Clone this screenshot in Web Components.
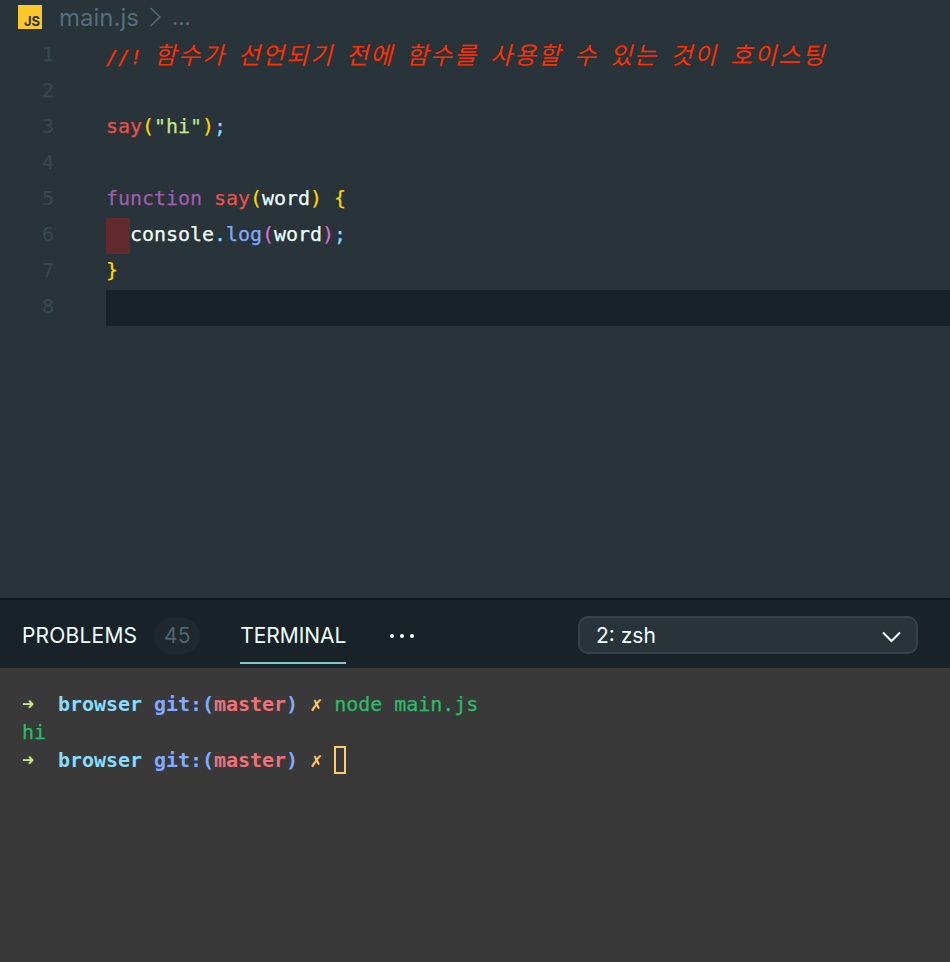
<!DOCTYPE html>
<html lang="ko">
<head>
<meta charset="utf-8">
<title>main.js</title>
<style>
  html, body { margin: 0; height: 100%; background: #29333a; }
  body { display: flex; flex-direction: column; height: 962px; overflow: hidden; }
</style>
</head>
<body>
<editor-breadcrumb>main.js</editor-breadcrumb>
<code-editor>
  <code-line n="1"><code-token kind="comment">//! <code-token kind="wide">함수가</code-token> <code-token kind="wide">선언되기</code-token> <code-token kind="wide">전에</code-token> <code-token kind="wide">함수를</code-token> <code-token kind="wide">사용할</code-token> <code-token kind="wide">수</code-token> <code-token kind="wide">있는</code-token> <code-token kind="wide">것이</code-token> <code-token kind="wide">호이스팅</code-token></code-token></code-line>
  <code-line n="2"></code-line>
  <code-line n="3"><code-token kind="red">say</code-token><code-token kind="yellow">(</code-token><code-token kind="string">"hi"</code-token><code-token kind="yellow">)</code-token><code-token kind="cyan">;</code-token></code-line>
  <code-line n="4"></code-line>
  <code-line n="5"><code-token kind="purple">function</code-token> <code-token kind="red">say</code-token><code-token kind="yellow">(</code-token><code-token kind="white">word</code-token><code-token kind="yellow">)</code-token> <code-token kind="yellow">{</code-token></code-line>
  <code-line n="6"><code-token kind="indent">  </code-token><code-token kind="white">console</code-token><code-token kind="cyan">.</code-token><code-token kind="blue">log</code-token><code-token kind="pink">(</code-token><code-token kind="white">word</code-token><code-token kind="pink">)</code-token><code-token kind="cyan">;</code-token></code-line>
  <code-line n="7"><code-token kind="yellow">}</code-token></code-line>
  <code-line n="8" current></code-line>
</code-editor>
<panel-header>
  <panel-tab badge="45">PROBLEMS</panel-tab>
  <panel-tab active>TERMINAL</panel-tab>
  <more-dots></more-dots>
  <terminal-select>2: zsh</terminal-select>
</panel-header>
<terminal-view>
  <term-prompt><code-token kind="t-green">node main.js</code-token></term-prompt>
  <term-output>hi</term-output>
  <term-prompt><term-cursor></term-cursor></term-prompt>
</terminal-view>

<script>
  const MONO = '"DejaVu Sans Mono", "Noto Sans CJK KR", monospace'
  const UI = 'Inter, "Noto Sans", sans-serif'

  /**
   * Small helper so every element gets an open shadow root from a string.
   */
  const define = (name, html, extra = class extends HTMLElement {}) => {
    const template = document.createElement('template')
    template.innerHTML = html
    // Source newlines between top level nodes would render under white-space: pre.
    for (const node of [...template.content.childNodes]) {
      if (node.nodeType === Node.TEXT_NODE && node.textContent.includes('\n')) node.remove()
    }
    customElements.define(name, class extends extra {
      constructor() {
        super()
        this.attachShadow({ mode: 'open' })
          .appendChild(template.content.cloneNode(true))
        if (this.setup) this.setup()
      }
    })
  }

  define('editor-breadcrumb', `
<style>
  :host { display: flex; align-items: center; height: 38px; flex: none; box-sizing: border-box;
    padding: 0 0 4px 18px; font: 24px ${UI}; color: #546e7a; background: #29333a; }
  .js { width: 24px; height: 24px; background: #fcc72b; position: relative; margin-right: 17px; flex: none; }
  .js span { position: absolute; right: 2px; bottom: 1px; font: 700 13px/14px ${UI}; color: #29333a; }
  svg { margin: 0 10px 0 10px; }
  .dots { font-size: 22px; }
</style>
<div class="js"><span>JS</span></div>
<slot></slot>
<svg width="13" height="22" viewBox="0 0 13 22"><path d="M1.5 2 L11 11 L1.5 20" fill="none" stroke="#546e7a" stroke-width="1.5"/></svg>
<span class="dots">...</span>`)

  define('code-editor', `
<style>
  :host { display: block; flex: none; height: 560px; background: #29333a;
    font: 20px/32px ${MONO}; letter-spacing: -0.04px; color: #eeffff; -webkit-text-stroke: 0.25px; }
</style>
<slot></slot>`)

  define('code-line', `
<style>
  :host { display: flex; height: 36px; white-space: pre; }
  .num { width: 106px; flex: none; box-sizing: border-box; padding-left: 42px; color: #37474f; }
  .body { flex: 1; }
  :host([current]) .body { background: #1a2229; }
</style>
<div class="num"></div>
<div class="body"><slot></slot></div>`, class extends HTMLElement {
    setup() {
      this.shadowRoot.querySelector('.num').textContent = this.getAttribute('n')
    }
  })

  define('code-token', `
<style>
  :host { display: inline; }
  :host([kind=comment]) { color: #ff2f00; font-style: italic; }
  :host([kind=wide]) { font-size: 24px; letter-spacing: 1.92px; font-family: "Noto Sans CJK KR", sans-serif; -webkit-text-stroke: 0; }
  :host([kind=red]) { color: #e5534b; }
  :host([kind=yellow]) { color: #ffd600; }
  :host([kind=string]) { color: #c3e88d; }
  :host([kind=cyan]) { color: #89ddff; }
  :host([kind=purple]) { color: #9c5fb0; }
  :host([kind=white]) { color: #eeffff; }
  :host([kind=blue]) { color: #82aaff; }
  :host([kind=pink]) { color: #d66fd0; }
  :host([kind=indent]) { background: #622a2c; display: inline-block; height: 36px; width: 24px; vertical-align: top; }
  :host([kind=t-green]) { color: #2ebc6a; font-weight: 400; }
</style>
<slot></slot>`)

  define('panel-header', `
<style>
  :host { display: flex; align-items: center; flex: none; height: 70px; box-sizing: border-box;
    padding: 0 32px 0 22px; background: #1a2229; border-top: 2px solid #12181d; }
</style>
<slot></slot>`)

  define('panel-tab', `
<style>
  :host { display: flex; align-items: center; align-self: stretch; position: relative; box-sizing: border-box;
    padding-top: 3px; font: 21px ${UI}; color: #eeffff; margin-right: 40px; letter-spacing: 0.2px; }
  :host([active]) { letter-spacing: -0.05px; }
  :host([active])::after { content: ""; position: absolute; left: 0; right: 0; bottom: 4px; height: 2px; background: #80cbc4; }
  .badge { display: none; margin-left: 17px; width: 46px; height: 36px; border-radius: 18px;
    background: #1f282e; color: #4f6570; align-items: center; justify-content: center; letter-spacing: 0; }
</style>
<slot></slot><span class="badge"></span>`, class extends HTMLElement {
    setup() {
      const badge = this.getAttribute('badge')
      if (badge) {
        const el = this.shadowRoot.querySelector('.badge')
        el.textContent = badge
        el.style.display = 'flex'
      }
    }
  })

  define('more-dots', `
<style>
  :host { display: flex; gap: 6px; flex: none; margin: 3px 0 0 4px; }
  i { width: 4px; height: 4px; border-radius: 50%; background: #eeffff; }
</style>
<i></i><i></i><i></i>`)

  define('terminal-select', `
<style>
  :host { display: flex; align-items: center; justify-content: space-between; margin-left: auto; box-sizing: border-box;
    width: 340px; height: 38px; margin-top: 2px; padding: 0 15px 0 16px; border: 2px solid #33424b; border-radius: 10px;
    background: #29333a; font: 21px ${UI}; color: #eeffff; }
  svg { margin-top: 3px; }
</style>
<slot></slot>
<svg width="19" height="12" viewBox="0 0 19 12"><path d="M1 1.5 L9.5 10 L18 1.5" fill="none" stroke="#eeffff" stroke-width="2"/></svg>`)

  define('terminal-view', `
<style>
  :host { display: block; flex: 1; box-sizing: border-box; padding: 22px 0 0 22px; background: #393939;
    font: 20px/28px ${MONO}; letter-spacing: -0.04px; color: #2ebc6a; -webkit-text-stroke: 0.25px; }
</style>
<slot></slot>`)

  define('term-prompt', `
<style>
  :host { display: block; height: 28px; white-space: pre; }
  b { font-weight: 700; -webkit-text-stroke: 0; }
  .arrow { color: #c3e88d; }
  .dir { color: #89ddff; }
  .git { color: #82aaff; }
  .branch { color: #f07178; }
  .x { color: #ffcb6b; }
</style><b class="arrow">➜</b>  <b class="dir">browser</b> <b class="git">git:(</b><b class="branch">master</b><b class="git">)</b> <b class="x">✗</b> <slot></slot>`)

  define('term-output', `
<style>:host { display: block; height: 28px; }</style>
<slot></slot>`)

  define('term-cursor', `
<style>
  :host { display: inline-block; box-sizing: border-box; width: 12px; height: 28px; vertical-align: top;
    border: 2px solid #ffcb6b; }
</style>`)
</script>
</body>
</html>
